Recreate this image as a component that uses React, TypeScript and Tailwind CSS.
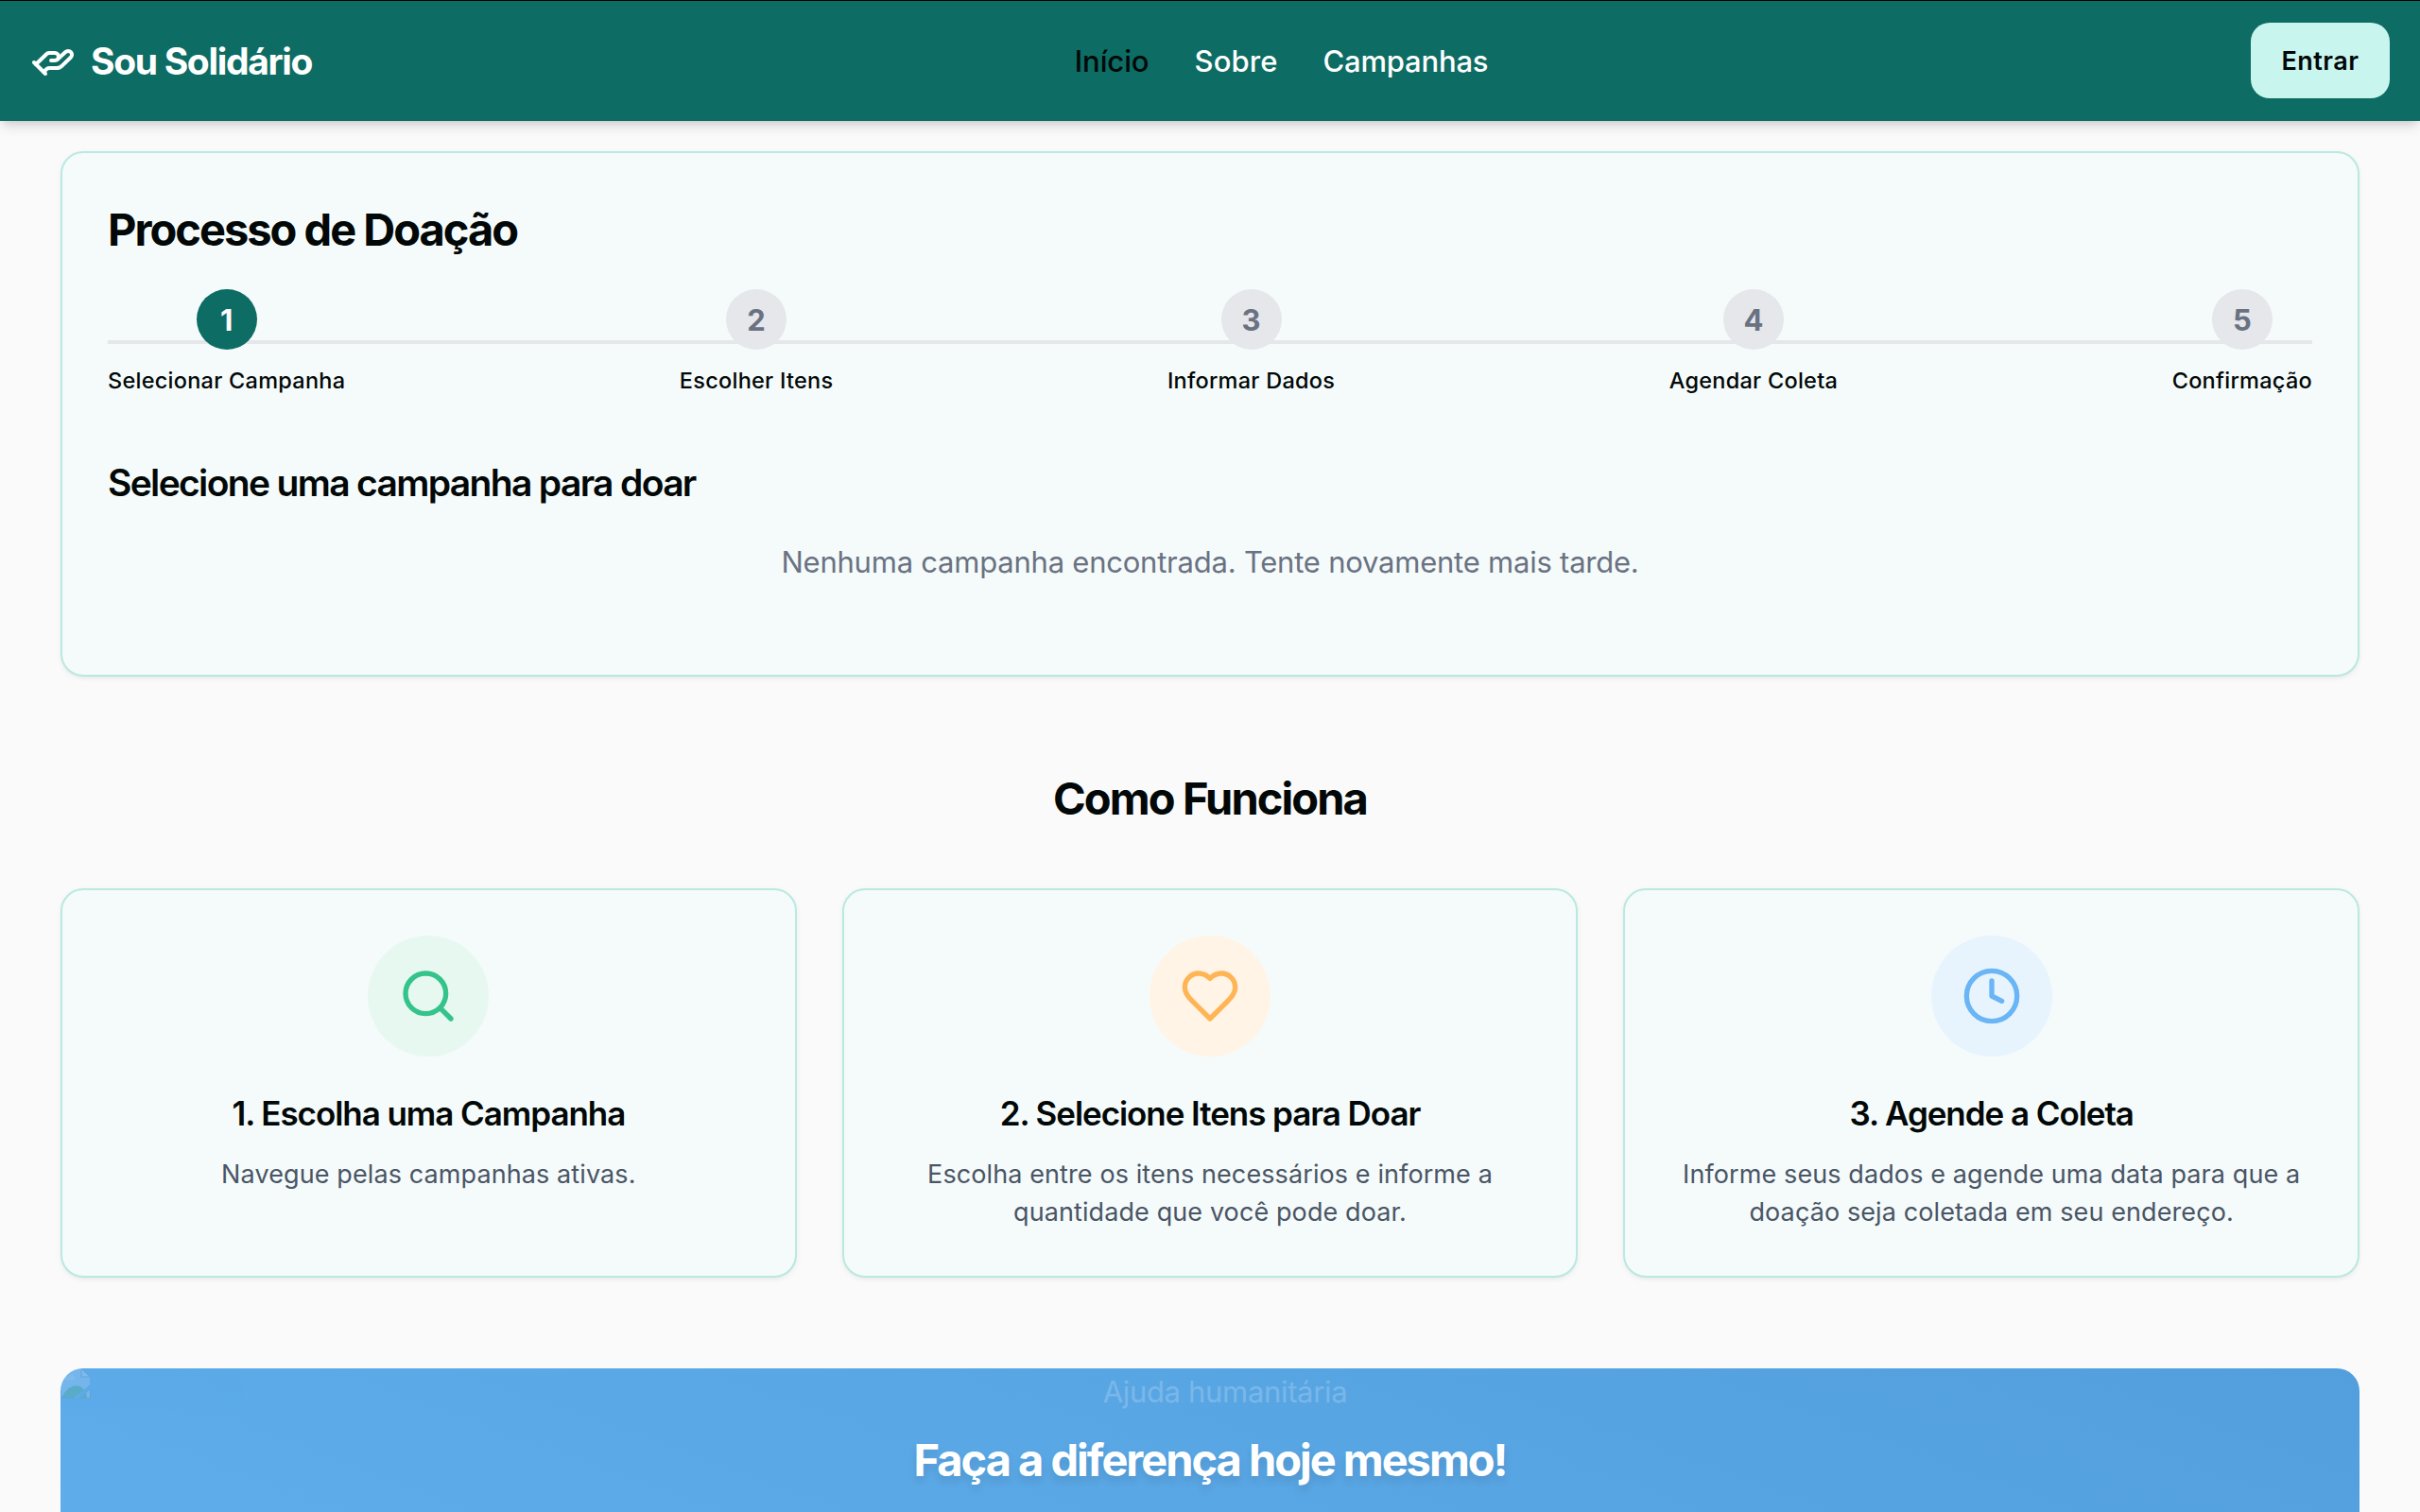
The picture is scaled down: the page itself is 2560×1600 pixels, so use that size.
import type { ReactNode } from 'react';

const iconBase = {
  viewBox: '0 0 24 24',
  fill: 'none',
  stroke: 'currentColor',
  strokeWidth: 2,
  strokeLinecap: 'round' as const,
  strokeLinejoin: 'round' as const,
};

function HandIcon() {
  return (
    <svg {...iconBase} className="size-12">
      <path d="M11 12h2a2 2 0 1 0 0-4h-3c-.6 0-1.1.2-1.4.6L3 14" />
      <path d="m7 18 1.6-1.4c.3-.4.8-.6 1.4-.6h4c1.1 0 2.1-.4 2.8-1.2l4.6-4.4a2 2 0 0 0-2.75-2.91l-4.2 3.9" />
      <path d="m2 13 6 6" />
    </svg>
  );
}

function SearchIcon() {
  return (
    <svg {...iconBase} className="size-16">
      <circle cx="11" cy="11" r="8" />
      <path d="m21 21-4.3-4.3" />
    </svg>
  );
}

function HeartIcon() {
  return (
    <svg {...iconBase} className="size-16">
      <path d="M19 14c1.49-1.46 3-3.21 3-5.5A5.5 5.5 0 0 0 16.5 3c-1.76 0-3 .5-4.5 2-1.5-1.5-2.74-2-4.5-2A5.5 5.5 0 0 0 2 8.5c0 2.3 1.5 4.05 3 5.5l7 7Z" />
    </svg>
  );
}

function ClockIcon() {
  return (
    <svg {...iconBase} className="size-16">
      <circle cx="12" cy="12" r="10" />
      <path d="M12 6v6l4 2" />
    </svg>
  );
}

function BrokenImageIcon() {
  return (
    <svg viewBox="0 0 32 32" className="size-8 shrink-0">
      <path d="M1 0h21l9 9v8L16 31H1Z" fill="#d3e3fb" />
      <path d="M22 0v9h9Z" fill="#fff" stroke="#7c8794" strokeWidth="1" />
      <path d="M3 12c0-3 3-4 5-3 1-4 7-3 7 1 1 0 1 1 1 2Z" fill="#fff" />
      <path d="M1 31C8 17 20 15 25 23L15 31Z" fill="#4caf50" />
      <path d="M20 31l8-6 2 6Z" fill="#4caf50" />
      <path d="M31 23v8h-3l-1-5Z" fill="#d3e3fb" />
      <path d="M1 31.5h14M20 31.5h11.5V22" fill="none" stroke="#7c8794" strokeWidth="1" />
    </svg>
  );
}

function Header() {
  return (
    <header className="relative z-10 flex h-32 items-center justify-between bg-[#0d6c63] px-8 text-white shadow-[inset_0_1px_0_#000,0_8px_12px_-2px_rgba(0,0,0,0.12),0_4px_8px_-4px_rgba(0,0,0,0.12)]">
      <div className="flex items-center gap-4">
        <HandIcon />
        <span className="pt-0.5 text-[39px] leading-[56px] font-bold tracking-[-1.33px]">Sou Solidário</span>
      </div>
      <nav className="flex gap-12 pt-px text-[31px] leading-12 font-medium">
        <a className="tracking-[-0.1px] text-[#020807]">Início</a>
        <a className="tracking-[0.1px]">Sobre</a>
        <a className="tracking-[-0.19px]">Campanhas</a>
      </nav>
      <button className="h-20 w-[147px] rounded-[20px] bg-[#c8f5ee] pt-[3px] text-[27px] font-semibold tracking-[0.466px] text-[#020807]">
        Entrar
      </button>
    </header>
  );
}

const steps = ['Selecionar Campanha', 'Escolher Itens', 'Informar Dados', 'Agendar Coleta', 'Confirmação'];

function Stepper() {
  return (
    <div className="relative mt-[30px] flex justify-between">
      <div className="absolute inset-x-0 top-[54px] h-1 bg-[#e5e7eb]" />
      {steps.map((label, i) => (
        <div key={label} className="relative flex flex-col items-center gap-[17px]">
          <div
            className={
              i === 0
                ? 'flex size-16 items-center justify-center rounded-full bg-[#0d6c63] pt-0.5 text-[31px] leading-12 font-bold text-white'
                : 'flex size-16 items-center justify-center rounded-full bg-[#e5e7eb] pt-0.5 text-[31px] leading-12 font-bold text-gray-500'
            }
          >
            {i + 1}
          </div>
          <span className="text-[23.5px] leading-8 font-medium tracking-[0.26px]">{label}</span>
        </div>
      ))}
    </div>
  );
}

const cardClass = 'rounded-3xl border-2 border-[#b9e9e0] bg-[#f5fbfb] shadow-[0_2px_6px_rgba(0,0,0,0.05),0_2px_4px_-2px_rgba(0,0,0,0.05)]';

function DonationProcess() {
  return (
    <section className={`${cardClass} h-[556px] p-12`}>
      <h1 className="text-[47px] leading-[66px] font-bold tracking-[-2px]">Processo de Doação</h1>
      <Stepper />
      <h2 className="mt-16 text-[39px] leading-[56px] font-semibold tracking-[-1.66px]">
        Selecione uma campanha para doar
      </h2>
      <p className="mt-8 text-center text-[31px] leading-12 tracking-[-0.225px] text-gray-500">
        Nenhuma campanha encontrada. Tente novamente mais tarde.
      </p>
    </section>
  );
}

function FeatureCard({ icon, tint, title, children }: { icon: ReactNode; tint: string; title: string; children: ReactNode }) {
  return (
    <article className={`${cardClass} flex h-[412px] flex-col items-center pt-12 text-center`}>
      <div className={`flex size-32 items-center justify-center rounded-full ${tint}`}>{icon}</div>
      <h3 className="mt-9 text-[35px] leading-12 font-semibold tracking-[-1.06px]">{title}</h3>
      <p className="mt-[21px] text-[27px] leading-10 tracking-[0.1px] text-gray-600">{children}</p>
    </article>
  );
}

function HowItWorks() {
  return (
    <section className="mt-[97px]">
      <h2 className="text-center text-[47px] leading-[64px] font-bold tracking-[-1.9px]">Como Funciona</h2>
      <div className="mt-[63px] grid grid-cols-3 gap-12">
        <FeatureCard icon={<SearchIcon />} tint="bg-[#e7f8f0] text-[#34c38a]" title="1. Escolha uma Campanha">
          Navegue pelas campanhas ativas.
        </FeatureCard>
        <FeatureCard icon={<HeartIcon />} tint="bg-[#fff4e6] text-[#ffb555]" title="2. Selecione Itens para Doar">
          Escolha entre os itens necessários e informe a
          <br />
          quantidade que você pode doar.
        </FeatureCard>
        <FeatureCard icon={<ClockIcon />} tint="bg-[#e8f4fd] text-[#69b5f5]" title="3. Agende a Coleta">
          Informe seus dados e agende uma data para que a
          <br />
          doação seja coletada em seu endereço.
        </FeatureCard>
      </div>
    </section>
  );
}

function Banner() {
  return (
    <section className="relative mt-24 h-[480px] overflow-hidden rounded-3xl bg-linear-[20deg] from-[#62b1ee] to-[#539fde] pt-[65px] text-white">
      <div className="absolute inset-x-0 top-0 flex opacity-20">
        <BrokenImageIcon />
        <span className="flex-1 pt-px text-center text-[31px] leading-12 tracking-[-0.33px]">Ajuda humanitária</span>
      </div>
      <h2 className="text-center text-[47px] leading-[64px] font-bold tracking-[-2.028px] [text-shadow:0_6px_8px_rgba(0,0,0,0.1)]">
        Faça a diferença hoje mesmo!
      </h2>
    </section>
  );
}

export default function App() {
  return (
    <div className="h-[1600px] w-[2560px] overflow-hidden bg-[#fafafa] font-['Inter',sans-serif] text-[#020807]">
      <Header />
      <main className="px-16 pt-8">
        <DonationProcess />
        <HowItWorks />
        <Banner />
      </main>
    </div>
  );
}
